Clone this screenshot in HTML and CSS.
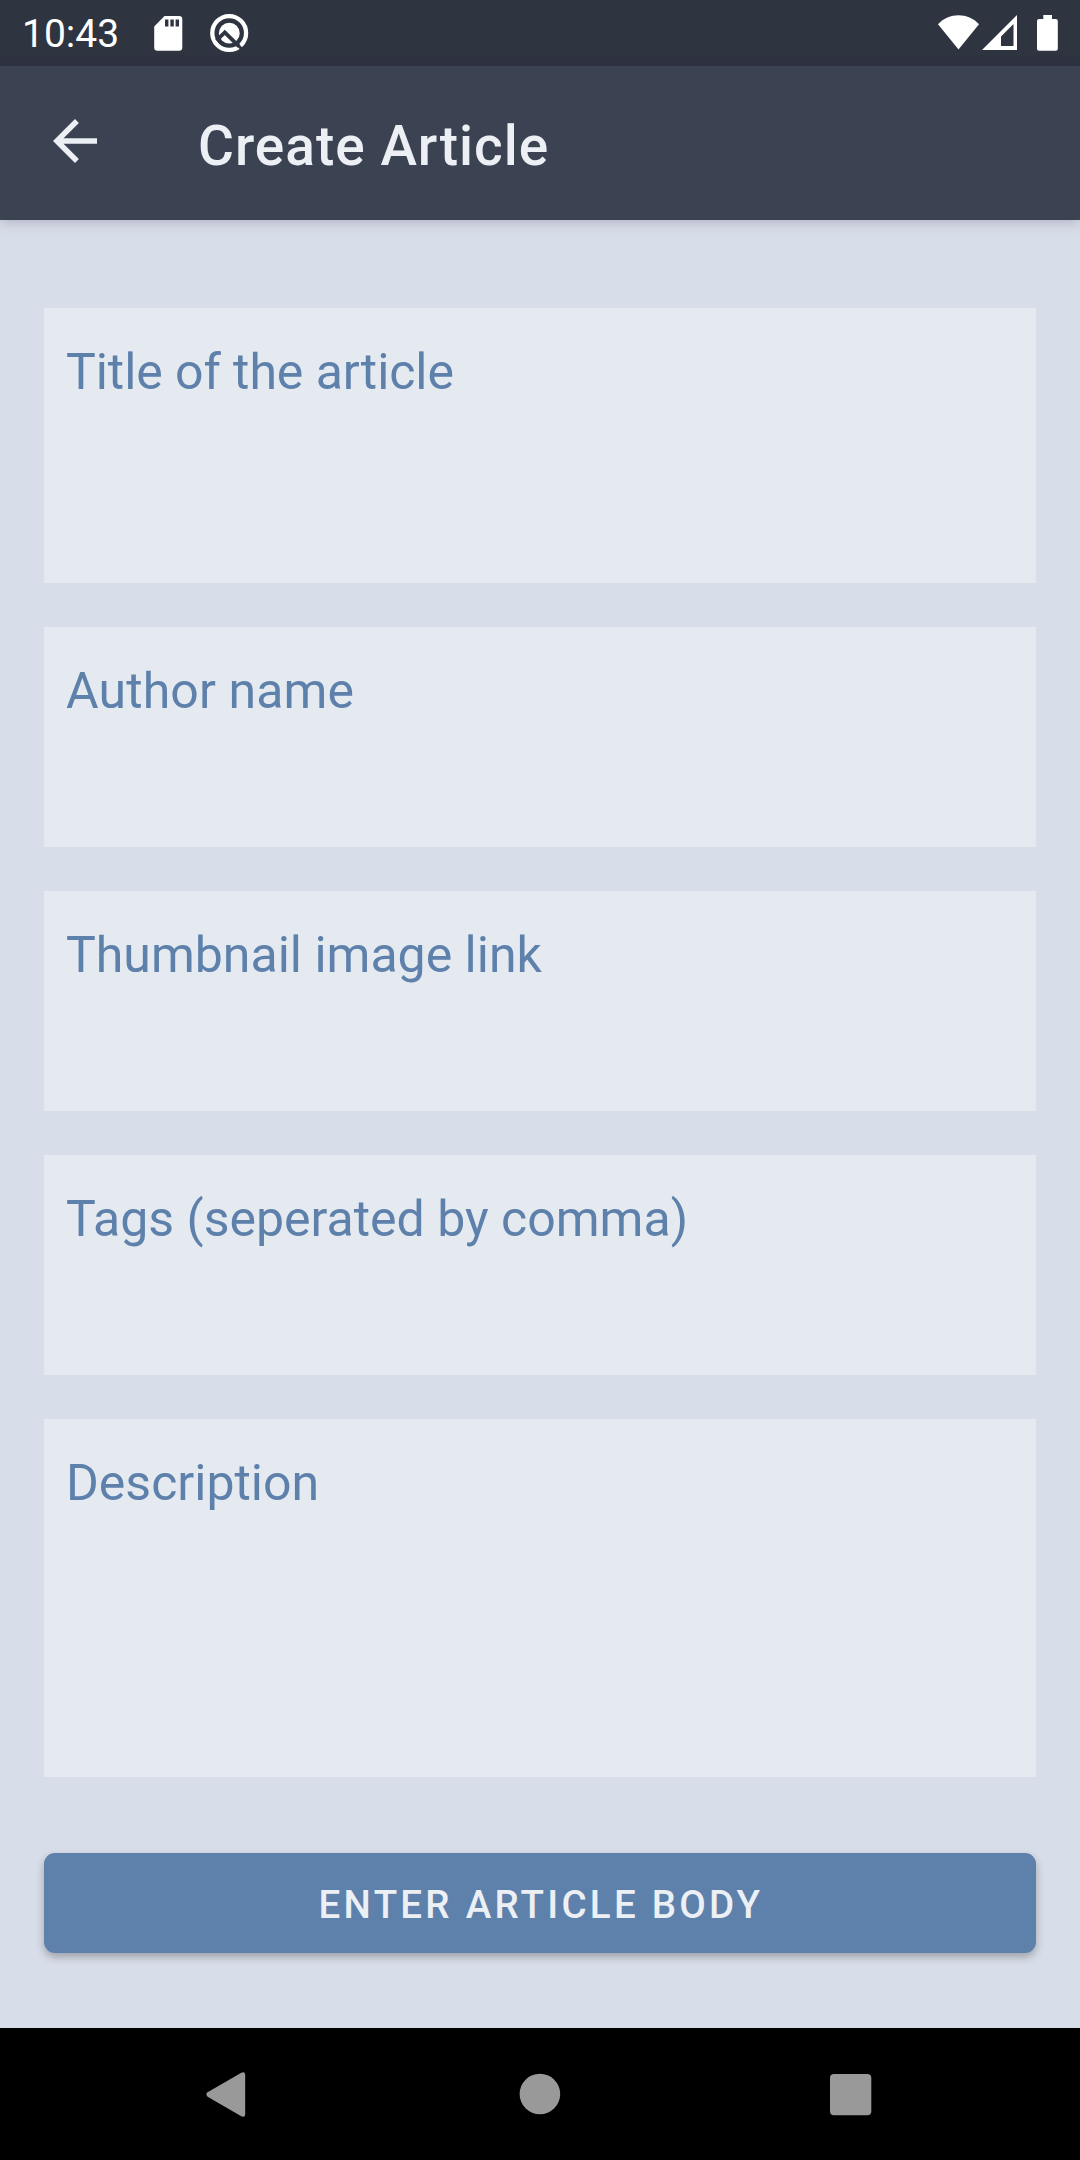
FILE: index.html
```html
<!DOCTYPE html>
<html lang="en">
<head>
<meta charset="utf-8">
<title>Create Article</title>
<link rel="stylesheet" href="styles.css">
</head>
<body>
<div class="screen">
  <div class="status-bar">
    <span class="clock">10:43</span>
    <svg class="notifications" width="110" height="66" viewBox="144 0 110 66">
      <path fill="#fff" fill-rule="evenodd" d="M164.500 16H179a3.300 3.300 0 0 1 3.300 3.300V47.500a3.300 3.300 0 0 1-3.300 3.300H157.500a3.300 3.300 0 0 1-3.300-3.300V26.400zM165 19.500v7h3.400v-7zM170.400 19.500v7h3.400v-7zM175.600 19.500v7h3.400v-7z"/>
      <circle cx="229.200" cy="33" r="16.900" fill="none" stroke="#fff" stroke-width="4.300"/>
      <circle cx="229.300" cy="33.200" r="10.400" fill="#fff"/>
      <path fill="none" stroke="#2e3440" stroke-width="3.800" d="M216.500 40.500L224.800 32.400L239 46.300"/>
      <path fill="none" stroke="#2e3440" stroke-width="3" d="M237 44.300L246 53.300"/>
    </svg>
    <svg class="system" width="130" height="66" viewBox="934 0 130 66">
      <path fill="#fff" d="M938 24.300C949 12.300 968 12.300 979 24.300L958.500 49.500z"/>
      <path fill="#fff" fill-rule="evenodd" d="M982 50L1017 15V50zM1001 46H1013.500V24L1001 36.500z"/>
      <path fill="#fff" d="M1043.300 15h8.700v4h3.800a2 2 0 0 1 2 2v27.800a2 2 0 0 1-2 2h-16.800a2 2 0 0 1-2-2V21a2 2 0 0 1 2-2h4.300z"/>
    </svg>
  </div>
  <header class="app-bar">
    <svg class="back" width="66" height="66" viewBox="0 0 24 24"><path fill="#eceff4" d="M20 11H7.830l5.590-5.590L12 4l-8 8 8 8 1.410-1.410L7.830 13H20z"/></svg>
    <h1 class="title">Create Article</h1>
  </header>
  <main class="form">
    <div class="field field-title">Title of the article</div>
    <div class="field field-author">Author name</div>
    <div class="field">Thumbnail image link</div>
    <div class="field">Tags (seperated by comma)</div>
    <div class="field field-description">Description</div>
    <button class="submit">ENTER ARTICLE BODY</button>
  </main>
  <nav class="nav-bar">
    <svg width="1080" height="132" viewBox="0 2028 1080 132" fill="#999">
      <path d="M207.600 2092.300L241.300 2072.700Q245.200 2071 245.200 2075.300V2113.700Q245.200 2118 241.300 2116.300L207.600 2096.700Q205.200 2094.500 207.600 2092.300z"/>
      <circle cx="539.900" cy="2094" r="20.300"/>
      <rect x="830" y="2074" width="41.300" height="41.300" rx="4"/>
    </svg>
  </nav>
</div>
</body>
</html>
```
FILE: styles.css
```css
body {
  margin: 0;
  font-family: Roboto, sans-serif;
}

.screen {
  display: flex;
  flex-direction: column;
  width: 1080px;
  height: 2160px;
  overflow: hidden;
  background: #d8dee9;
}

.status-bar {
  display: flex;
  height: 66px;
  background: #2e3440;
}

.clock {
  width: 122px;
  padding-left: 22px;
  color: #fff;
  font-size: 39px;
  line-height: 69px;
}

.system {
  margin-left: auto;
  margin-right: 16px;
}

.app-bar {
  display: flex;
  align-items: center;
  box-sizing: border-box;
  height: 154px;
  padding-left: 42px;
  background: #3b4252;
  box-shadow: 0 2px 12px rgba(60, 40, 80, 0.25);
}

.back {
  margin-bottom: 4px;
}

.title {
  margin: 5px 0 0 90px;
  color: #eceff4;
  font-size: 55px;
  font-weight: 500;
  line-height: 64px;
  letter-spacing: 1px;
}

.form {
  display: flex;
  flex: 1;
  flex-direction: column;
  gap: 44px;
  padding: 88px 44px 0;
}

.field {
  box-sizing: border-box;
  height: 220px;
  padding: 35px 22px 0;
  background: #e5e9f0;
  color: #5e81ac;
  font-size: 50px;
  line-height: 58px;
}

.field-title {
  height: 275px;
  letter-spacing: -0.07px;
}

.field-author {
  letter-spacing: 0.12px;
}

.field-description {
  height: 358px;
}

.submit {
  height: 100px;
  margin-top: 32px;
  padding: 2px 0 0 2px;
  border: 0;
  border-radius: 11px;
  background: #5e81ac;
  box-shadow: 0 4px 8px rgba(0, 0, 0, 0.28);
  color: #eceff4;
  font: 500 38.5px Roboto, sans-serif;
  letter-spacing: 3.25px;
}

.nav-bar {
  display: flex;
  height: 132px;
  background: #000;
}
```
